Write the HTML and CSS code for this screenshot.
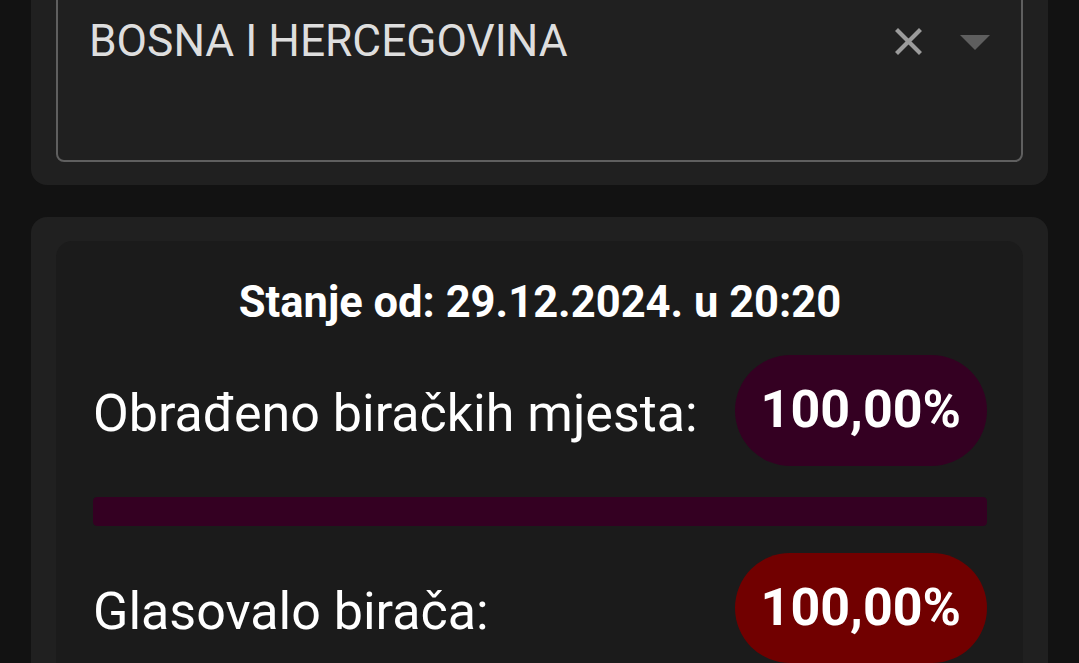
FILE: index.html
```html
<!DOCTYPE html>
<html lang="bs">
<head>
<meta charset="utf-8">
<title>Izbori</title>
<link rel="stylesheet" href="styles.css">
</head>
<body>
<main class="page">
  <section class="card card-filter">
    <div class="select">
      <span class="select-value">BOSNA I HERCEGOVINA</span>
      <span class="select-actions">
        <svg class="icon-clear" width="27" height="27" viewBox="0 0 27 27" aria-hidden="true">
          <path d="M3 3 L24 24 M24 3 L3 24" stroke="#9b9b9b" stroke-width="4.2" stroke-linecap="square" fill="none"/>
        </svg>
        <svg class="icon-arrow" width="30" height="15" viewBox="0 0 30 15" aria-hidden="true">
          <path d="M0 0 H30 L15 15 Z" fill="#5e5e5e"/>
        </svg>
      </span>
    </div>
  </section>

  <section class="card card-stats">
    <div class="stats">
      <h2 class="stats-title">Stanje od: 29.12.2024. u 20:20</h2>
      <div class="stat-row">
        <span class="stat-label">Obrađeno biračkih mjesta:</span>
        <span class="badge badge-purple">100,00%</span>
      </div>
      <div class="bar"><div class="bar-fill" style="width:100%"></div></div>
      <div class="stat-row stat-row-second">
        <span class="stat-label">Glasovalo birača:</span>
        <span class="badge badge-red">100,00%</span>
      </div>
    </div>
  </section>
</main>
</body>
</html>
```

FILE: styles.css
```css
html, body {
  margin: 0;
  padding: 0;
  background: #121212;
  font-family: Roboto, "Noto Sans", sans-serif;
  color: #ffffff;
  overflow: hidden;
}

.page {
  padding: 0 31px;
  display: flex;
  flex-direction: column;
  gap: 32px;
}

.card {
  background: #202020;
  border-radius: 16px;
  padding: 24px 25px;
}

.card-filter {
  margin-top: -40px;
  padding: 16px 25px 23px 25px;
}

.select {
  box-sizing: border-box;
  height: 186px;
  border: 2px solid #5f5f5f;
  border-radius: 8px;
  padding: 37px 31px 0 31px;
  display: flex;
  align-items: flex-start;
}

.select-value {
  font-size: 44.3px;
  line-height: 1.2;
  color: #dedede;
}

.select-actions {
  margin-left: auto;
  display: flex;
  align-items: center;
  gap: 38px;
  height: 53px;
}

.icon-arrow {
  margin-top: 2px;
}

.stats {
  background: #1b1b1b;
  border-radius: 16px;
  padding: 36px 36px 40px 37px;
}

.stats-title {
  margin: 0;
  text-align: center;
  font-size: 43.5px;
  font-weight: 700;
  line-height: 1.2;
}

.stat-row {
  margin-top: 26px;
  display: flex;
  align-items: center;
  justify-content: space-between;
}

.stat-row-second {
  margin-top: 27px;
}

.stat-label {
  font-size: 52px;
  line-height: 1.2;
  padding-top: 8px;
}

.badge {
  font-size: 52px;
  font-weight: 700;
  line-height: 1.2;
  padding: 24px 26px;
  border-radius: 56px;
  min-width: 199px;
  text-align: center;
}

.badge-purple {
  background: #340022;
}

.badge-red {
  background: #710000;
}

.bar {
  margin-top: 31px;
  height: 29px;
  border-radius: 4px;
  background: #1b1b1b;
  overflow: hidden;
}

.bar-fill {
  height: 100%;
  background: #340022;
  border-radius: 4px;
}
```
